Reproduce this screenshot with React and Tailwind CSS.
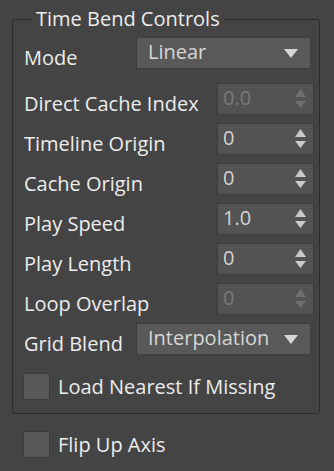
import React from 'react';

const SpinArrows = ({ disabled }) => (
    <svg width="11" height="20" viewBox="0 0 11 20" className="shrink-0">
        <path d="M5.5 0 L11 8 L0 8 Z" fill={disabled ? '#6f6f6f' : '#c9c9c9'} />
        <path d="M0 12 L11 12 L5.5 19 Z" fill={disabled ? '#6f6f6f' : '#c9c9c9'} />
    </svg>
);

const DropArrow = () => (
    <svg width="14" height="9" viewBox="0 0 14 9" className="shrink-0">
        <path d="M0 0 L14 0 L7 9 Z" fill="#d6d6d6" />
    </svg>
);

const SpinRow = ({ label, value, disabled }) => (
    <div className="flex items-center justify-between h-[32px] pr-[5px]">
        <span className="pt-[9px] text-[#ececec] whitespace-nowrap">{label}</span>
        <div className="w-[97px] h-[32px] shrink-0 flex items-center justify-between pl-[5px] pr-[7px] bg-[#535353] border border-[#3d3d3d]">
            <span className={`-mt-[3px] ${disabled ? 'text-[#787878]' : 'text-[#d2d2d2]'}`}>{value}</span>
            <SpinArrows disabled={disabled} />
        </div>
    </div>
);

const DropRow = ({ label, value }) => (
    <div className="flex items-center justify-between h-[32px] pr-[8px]">
        <span className="pt-[9px] text-[#ececec] whitespace-nowrap">{label}</span>
        <div className="w-[175px] h-[32px] shrink-0 flex items-center justify-between pl-[11px] pr-[12px] bg-[#595959] border border-[#3d3d3d]">
            <span className="-mt-[3px] text-[#d6d6d6] whitespace-nowrap">{value}</span>
            <DropArrow />
        </div>
    </div>
);

const Check = ({ label }) => (
    <div className="flex items-center gap-[8px] h-[27px]">
        <div className="w-[27px] h-[27px] bg-[#585858] border border-[#3d3d3d]" />
        <span className="text-[#ececec] whitespace-nowrap">{label}</span>
    </div>
);

const App = () => {
    return (
        <div
            className="w-[334px] h-[471px] bg-[#444444] text-[20px] leading-[24px] overflow-hidden pt-[7px]"
            style={{ fontFamily: '"Open Sans", "Noto Sans", sans-serif' }}
        >
            <fieldset className="ml-[12px] w-[308px] border border-[#2c2c2c] rounded-[3px] pl-[11px] pb-[13px]">
                <legend className="ml-[8px] px-[4px] text-[#ececec]">Time Bend Controls</legend>
                <div className="mt-[6px]">
                    <DropRow label="Mode" value="Linear" />
                </div>
                <div className="mt-[14px] flex flex-col gap-[8px]">
                    <SpinRow label="Direct Cache Index" value="0.0" disabled />
                    <SpinRow label="Timeline Origin" value="0" />
                    <SpinRow label="Cache Origin" value="0" />
                    <SpinRow label="Play Speed" value="1.0" />
                    <SpinRow label="Play Length" value="0" />
                    <SpinRow label="Loop Overlap" value="0" disabled />
                    <DropRow label="Grid Blend" value="Interpolation" />
                </div>
                <div className="mt-[18px] -ml-[1px]">
                    <Check label="Load Nearest If Missing" />
                </div>
            </fieldset>
            <div className="mt-[17px] ml-[23px]">
                <Check label="Flip Up Axis" />
            </div>
        </div>
    );
};

export default App;
